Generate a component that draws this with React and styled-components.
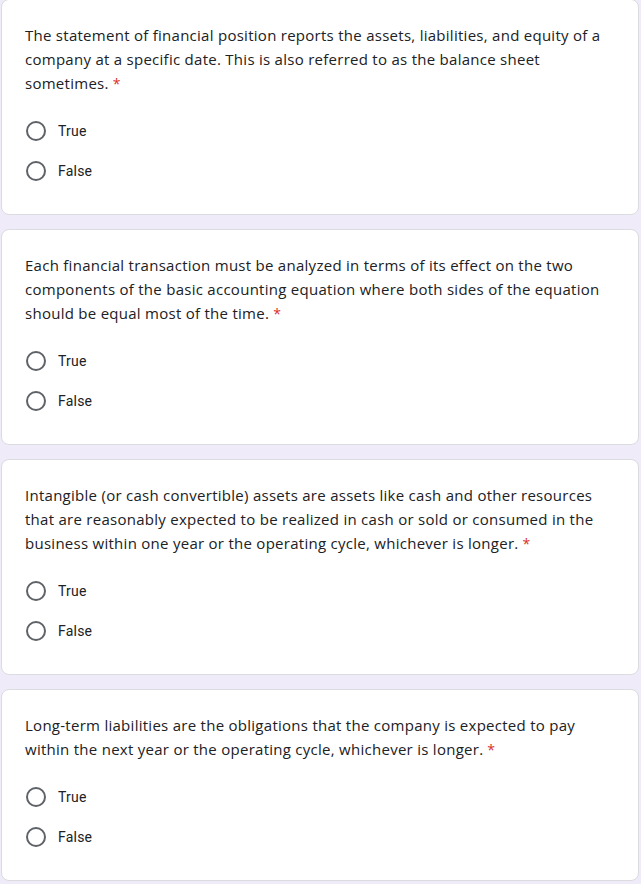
import React from 'react';
import styled, { createGlobalStyle } from 'styled-components';

const Global = createGlobalStyle`
  html, body {
    margin: 0;
    padding: 0;
    background: #f0ebf8;
  }
`;

const Page = styled.div`
  display: flex;
  flex-direction: column;
  gap: 14px;
  padding: 0 2px 0 1px;
  margin-top: -1px;
`;

const Card = styled.div`
  background: #fff;
  border: 1px solid #dadce0;
  border-radius: 8px;
  padding: 23px 24px 23px 23px;
`;

const Title = styled.div`
  font-family: "Open Sans", "Liberation Sans", sans-serif;
  font-size: 15px;
  line-height: 24px;
  color: #202124;
  letter-spacing: 0.27px;
  margin-bottom: 15px;
`;

const Req = styled.span`
  color: #d93025;
  margin-left: 4px;
  font-size: 14px;
`;

const Options = styled.div`
  display: flex;
  flex-direction: column;
`;

const Option = styled.label`
  display: flex;
  align-items: center;
  gap: 12px;
  height: 40px;
  padding-left: 1px;
  font-family: Roboto, "Liberation Sans", sans-serif;
  font-size: 14px;
  color: #202124;
  letter-spacing: 0.2px;
`;

const Radio = styled.span`
  width: 16px;
  height: 16px;
  border: 2px solid #5f6368;
  border-radius: 50%;
  flex: none;
`;

const questions = [
  'The statement of financial position reports the assets, liabilities, and equity of a company at a specific date. This is also referred to as the balance sheet sometimes.',
  'Each financial transaction must be analyzed in terms of its effect on the two components of the basic accounting equation where both sides of the equation should be equal most of the time.',
  'Intangible (or cash convertible) assets are assets like cash and other resources that are reasonably expected to be realized in cash or sold or consumed in the business within one year or the operating cycle, whichever is longer.',
  'Long-term liabilities are the obligations that the company is expected to pay within the next year or the operating cycle, whichever is longer.',
];

function App() {
  return (
    <>
      <Global />
      <Page>
        {questions.map((q, i) => (
          <Card key={i}>
            <Title>
              {q}
              <Req>*</Req>
            </Title>
            <Options>
              <Option><Radio />True</Option>
              <Option><Radio />False</Option>
            </Options>
          </Card>
        ))}
      </Page>
    </>
  );
}

export default App;
